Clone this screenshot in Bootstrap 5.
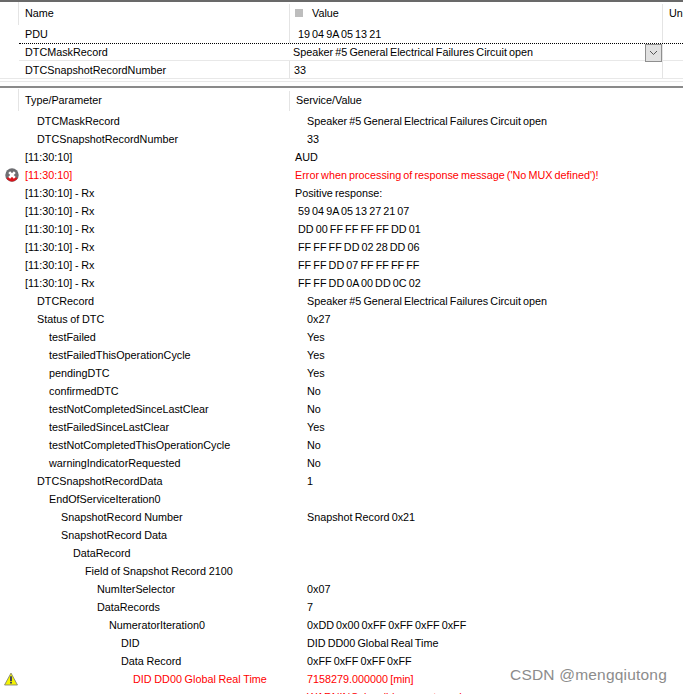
<!DOCTYPE html>
<html lang="en">
<head>
    <meta charset="utf-8">
    <meta name="viewport" content="width=device-width, initial-scale=1.0">
    <link href="https://cdn.jsdelivr.net/npm/bootstrap@5.3.1/dist/css/bootstrap.min.css" rel="stylesheet">
    <title>Diagnostics</title>
    <style>
        html, body { height: 100%; overflow: hidden; }
        body { font-family: "Liberation Sans", Arial, sans-serif; font-size: 10.8px; word-spacing: -.9px; line-height: 18px; color: #000; background: #fff; }
        .top-pane { height: 86px; border-top: 2px solid #696969; overflow: hidden; }
        .split-bar { height: 2px; background: #8a8a8a; }
        .grid-row { height: 18px; white-space: nowrap; }
        .cell-name { width: 289px; padding-left: 25px; flex: none; word-spacing: -.3px; }
        .cell-value { flex: 1 1 auto; min-width: 0; position: relative; }
        .cell-unit { width: 21px; flex: none; padding-left: 6px; border-left: 1px solid #e4e4e4; }
        .head-row { height: 23px; padding-top: 2px; }
        .head-row .cell-name { position: relative; }
        .head-row .cell-name::before { content: ""; position: absolute; left: 18px; top: -2px; bottom: 0; width: 1px; background: #e4e4e4; }
        .cell-value.sep { border-left: 1px solid #e4e4e4; }
        .line-b { border-bottom: 1px solid #e8e8e8; }
        .focus-row { border-top: 1px dotted #000; margin-left: 19px; line-height: 16px; }
        .focus-row .cell-name { width: 270px; padding-left: 6px; }
        .sort-box { display: inline-block; width: 8px; height: 8px; background: #bdbdbd; margin: 0 9px 0 5px; }
        .combo-btn { position: absolute; right: 0; top: 0; width: 17px; height: 18px; background: #e1e1e1; border: 1px solid #8f8f8f; display: flex; align-items: center; justify-content: center; }
        .lower-head { height: 22px; margin-top: 1px; padding-top: 2px; }
        .lower-head .cell-name { position: relative; }
        .lower-head .cell-name::before { content: ""; position: absolute; left: 18px; top: -2px; bottom: 0; width: 1px; background: #e4e4e4; }
        .lower-head .cell-value { padding-left: 6px; border-left: 1px solid #e4e4e4; }
        .log-list-wrap { padding-top: 1px; }
        .log-row { height: 18px; white-space: nowrap; position: relative; }
        .log-type { width: 295px; flex: none; word-spacing: -.3px; }
        .log-red { color: #f00; }
        .row-icon { position: absolute; left: 4px; top: 2px; line-height: 0; }
        .row-icon.icon-err { left: 5px; }
        .pane-mark { color: #8c8c8c; position: absolute; right: 16px; bottom: 10px; font-size: 15.5px; letter-spacing: .2px; word-spacing: 0; line-height: 18px; }
    </style>
</head>
<body class="position-relative">
    <div class="top-pane">
        <div class="d-flex head-row">
            <div class="cell-name">Name</div>
            <div class="cell-value sep"><span class="sort-box"></span>Value</div>
            <div class="cell-unit">Un</div>
        </div>
        <div class="d-flex grid-row">
            <div class="cell-name">PDU</div>
            <div class="cell-value sep ps-2">19 04 9A 05 13 21</div>
            <div class="cell-unit"></div>
        </div>
        <div class="d-flex grid-row focus-row line-b">
            <div class="cell-name">DTCMaskRecord</div>
            <div class="cell-value ps-1">Speaker #5 General Electrical Failures Circuit open
                <span class="combo-btn">
                    <svg width="9" height="6" viewBox="0 0 9 6"><path d="M1 1l3.5 3.5L8 1" fill="none" stroke="#555" stroke-width="1"/></svg>
                </span>
            </div>
            <div class="cell-unit"></div>
        </div>
        <div class="d-flex grid-row line-b">
            <div class="cell-name">DTCSnapshotRecordNumber</div>
            <div class="cell-value sep ps-1">33</div>
            <div class="cell-unit"></div>
        </div>
        <div class="line-b" style="height:3px"></div>
    </div>
    <div class="split-bar"></div>

    <div class="d-flex lower-head">
        <div class="cell-name">Type/Parameter</div>
        <div class="cell-value">Service/Value</div>
    </div>
    <div id="log-list" class="log-list-wrap"></div>
    <template id="log-template">
        <div class="d-flex log-row">
            <div class="log-type"></div>
            <div class="log-val"></div>
        </div>
    </template>

    <div class="pane-mark">CSDN @mengqiutong</div>

    <script>
        // [indent level, type, value indent, value, red, icon]
        const rows = [
            [1, 'DTCMaskRecord', 12, 'Speaker #5 General Electrical Failures Circuit open'],
            [1, 'DTCSnapshotRecordNumber', 12, '33'],
            [0, '[11:30:10]', 0, 'AUD'],
            [0, '[11:30:10]', 0, 'Error when processing of response message (\'No MUX defined\')!', true, 'err'],
            [0, '[11:30:10] - Rx', 0, 'Positive response:'],
            [0, '[11:30:10] - Rx', 3, '59 04 9A 05 13 27 21 07'],
            [0, '[11:30:10] - Rx', 3, 'DD 00 FF FF FF FF DD 01'],
            [0, '[11:30:10] - Rx', 3, 'FF FF FF DD 02 28 DD 06'],
            [0, '[11:30:10] - Rx', 3, 'FF FF DD 07 FF FF FF FF'],
            [0, '[11:30:10] - Rx', 3, 'FF FF DD 0A 00 DD 0C 02'],
            [1, 'DTCRecord', 12, 'Speaker #5 General Electrical Failures Circuit open'],
            [1, 'Status of DTC', 12, '0x27'],
            [2, 'testFailed', 12, 'Yes'],
            [2, 'testFailedThisOperationCycle', 12, 'Yes'],
            [2, 'pendingDTC', 12, 'Yes'],
            [2, 'confirmedDTC', 12, 'No'],
            [2, 'testNotCompletedSinceLastClear', 12, 'No'],
            [2, 'testFailedSinceLastClear', 12, 'Yes'],
            [2, 'testNotCompletedThisOperationCycle', 12, 'No'],
            [2, 'warningIndicatorRequested', 12, 'No'],
            [1, 'DTCSnapshotRecordData', 12, '1'],
            [2, 'EndOfServiceIteration0', 12, ''],
            [3, 'SnapshotRecord Number', 12, 'Snapshot Record 0x21'],
            [3, 'SnapshotRecord Data', 12, ''],
            [4, 'DataRecord', 12, ''],
            [5, 'Field of Snapshot Record 2100', 12, ''],
            [6, 'NumIterSelector', 12, '0x07'],
            [6, 'DataRecords', 12, '7'],
            [7, 'NumeratorIteration0', 12, '0xDD 0x00 0xFF 0xFF 0xFF 0xFF'],
            [8, 'DID', 12, 'DID DD00 Global Real Time'],
            [8, 'Data Record', 12, '0xFF 0xFF 0xFF 0xFF'],
            [9, 'DID DD00 Global Real Time', 12, '7158279.000000 [min]', true, 'warn'],
            [9, '', 12, 'WARNING: invalid parameter value', true]
        ];

        const icons = {
            err: '<svg width="14" height="14" viewBox="0 0 15 15"><circle cx="7.5" cy="7.5" r="7.2" fill="#6e6e72"/><path d="M1.5 11a7 7 0 0 0 12 0l-3-1.5h-6z" fill="#d8141c"/><path d="M4.5 4.5l6 6m0-6l-6 6" stroke="#fff" stroke-width="2.8"/></svg>',
            warn: '<svg width="14" height="14" viewBox="0 0 15 14"><path d="M7.5.7L14.4 13.4H.6z" fill="#f4f400" stroke="#8a8a70"/><path d="M6.6 4h1.8v5.2H6.6zM6.6 10h1.8v1.8H6.6z" fill="#24246a"/></svg>'
        };

        function printRow(item) {
            const tpl = document.getElementById('log-template').content.cloneNode(true);
            const type = tpl.querySelector('.log-type');
            const val = tpl.querySelector('.log-val');
            type.textContent = item[1];
            type.style.paddingLeft = (25 + item[0] * 12) + 'px';
            val.textContent = item[3];
            val.style.paddingLeft = item[2] + 'px';
            if (item[4]) {
                type.classList.add('log-red');
                val.classList.add('log-red');
            }
            if (item[5]) {
                const ic = document.createElement('span');
                ic.className = 'row-icon icon-' + item[5];
                ic.innerHTML = icons[item[5]];
                tpl.querySelector('.log-row').prepend(ic);
            }
            document.getElementById('log-list').appendChild(tpl);
        }

        rows.forEach(printRow);
    </script>
    <script src="https://cdn.jsdelivr.net/npm/bootstrap@5.3.1/dist/js/bootstrap.bundle.min.js"></script>
</body>
</html>
